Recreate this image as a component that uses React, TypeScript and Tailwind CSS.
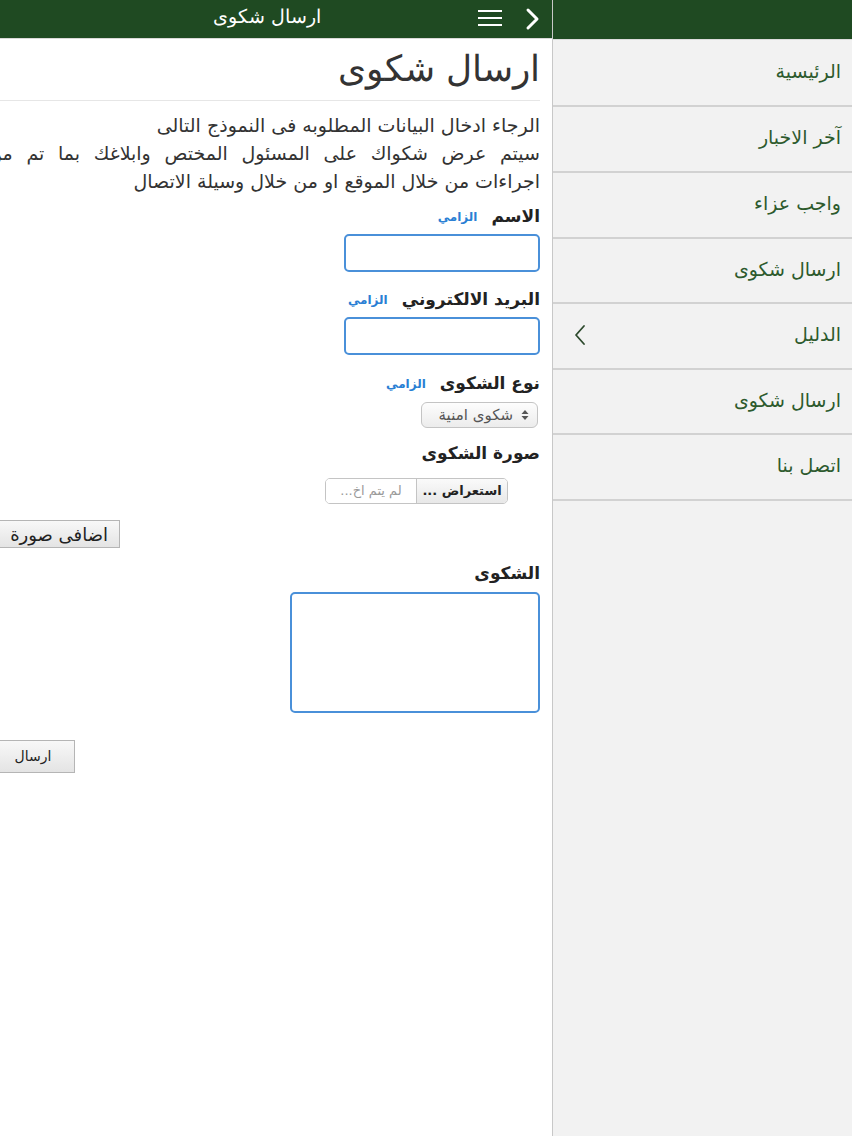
import React from "react";

const font = { fontFamily: '"DejaVu Sans", "Noto Sans", sans-serif' };

function Chevron() {
  return (
    <svg width="16" height="24" viewBox="0 0 16 24" fill="none">
      <path d="M3 3 L12 12 L3 21" stroke="white" strokeWidth="3" strokeLinecap="round" strokeLinejoin="round" />
    </svg>
  );
}

function Burger() {
  return (
    <svg width="26" height="20" viewBox="0 0 26 20" fill="none">
      <path d="M1 3 H25 M1 10 H25 M1 17 H25" stroke="white" strokeWidth="2.2" />
    </svg>
  );
}

function UpDown() {
  return (
    <svg width="8" height="12" viewBox="0 0 8 12">
      <path d="M4 1 L7.5 5 H0.5 Z" fill="#555" />
      <path d="M4 11 L7.5 7 H0.5 Z" fill="#555" />
    </svg>
  );
}

const navItems = [
  { label: "الرئيسية", h: "h-[66px]" },
  { label: "آخر الاخبار", h: "h-[66px]" },
  { label: "واجب عزاء", h: "h-[66px]" },
  { label: "ارسال شكوى", h: "h-[65px]" },
  { label: "الدليل", h: "h-[66px]" },
  { label: "ارسال شكوى", h: "h-[65px]" },
  { label: "اتصل بنا", h: "h-[66px]" },
];

export default function App() {
  return (
    <div className="flex w-[852px] h-[1136px] overflow-hidden bg-white" style={font}>
      {/* main panel */}
      <div className="w-[552px] shrink-0 flex flex-col overflow-hidden bg-white" dir="rtl">
        <div className="h-[39px] shrink-0 bg-[#1f4a22] flex items-center pr-[11px] border-b border-[#d9d9d9]">
          <Chevron />
          <div className="mr-[22px] mt-[-2px]"><Burger /></div>
          <div className="mr-[156px] text-white text-[19px] font-light leading-none mt-[-6px]">ارسال شكوى</div>
        </div>
        <div className="pr-[12px] flex-1">
          <h1 className="text-[36px] leading-[44px] font-light text-[#333] mt-[8px]">ارسال شكوى</h1>
          <div className="h-px bg-[#e6e6e6] mt-[9px] w-[540px]" />
          <div className="mt-[10px] text-[19px] leading-[28px] text-[#333]">
            <div className="whitespace-nowrap">الرجاء ادخال البيانات المطلوبه فى النموذج التالى</div>
            <div className="w-[552px] whitespace-nowrap flex justify-between">
              <span>سيتم</span><span>عرض</span><span>شكواك</span><span>على</span><span>المسئول</span><span>المختص</span><span>وابلاغك</span><span>بما</span><span>تم</span><span>من</span>
            </div>
            <div className="whitespace-nowrap">اجراءات من خلال الموقع او من خلال وسيلة الاتصال</div>
          </div>

          <div className="mt-[10px] flex items-center h-[24px]">
            <span className="text-[17px] font-bold text-[#222]">الاسم</span>
            <span className="mr-[14px] text-[12px] font-bold text-[#2a7fd4]">الزامي</span>
          </div>
          <div className="mt-[5px] w-[196px] h-[38px] rounded-[5px] border-2 border-[#4a90d9] bg-white" />

          <div className="mt-[16px] flex items-center h-[24px]">
            <span className="text-[17px] font-bold text-[#222]">البريد الالكتروني</span>
            <span className="mr-[14px] text-[12px] font-bold text-[#2a7fd4]">الزامي</span>
          </div>
          <div className="mt-[5px] w-[196px] h-[38px] rounded-[5px] border-2 border-[#4a90d9] bg-white" />

          <div className="mt-[17px] flex items-center h-[24px]">
            <span className="text-[17px] font-bold text-[#222]">نوع الشكوى</span>
            <span className="mr-[14px] text-[12px] font-bold text-[#2a7fd4]">الزامي</span>
          </div>
          <div className="mt-[6px] mr-[2px] w-[117px] h-[26px] rounded-[6px] border border-[#c4c4c4] bg-gradient-to-b from-[#fdfdfd] to-[#ececec] flex items-center pr-[8px]">
            <UpDown />
            <span className="mr-[8px] text-[15px] text-[#555]">شكوى امنية</span>
          </div>

          <div className="mt-[14px] flex items-center h-[24px]">
            <span className="text-[17px] font-bold text-[#222]">صورة الشكوى</span>
          </div>
          <div className="mt-[12px] mr-[32px] w-[183px] h-[26px] rounded-[5px] border border-[#c4c4c4] flex overflow-hidden">
            <div className="w-[91px] bg-gradient-to-b from-[#fafafa] to-[#e8e8e8] border-l border-[#c4c4c4] flex items-center justify-center text-[13px] font-bold text-[#222]">استعراض ...</div>
            <div className="flex-1 bg-white flex items-center justify-center text-[13px] text-[#999]">لم يتم اخ...</div>
          </div>

          <div className="mt-[16px] mr-[420px] w-[134px] h-[28px] border border-[#b5b5b5] bg-gradient-to-b from-[#f8f8f8] to-[#e4e4e4] flex items-center pr-[11px] text-[18px] text-[#222] whitespace-nowrap">اضافى صورة</div>

          <div className="mt-[14px] flex items-center h-[24px]">
            <span className="text-[17px] font-bold text-[#222]">الشكوى</span>
          </div>
          <div className="mt-[6px] w-[250px] h-[121px] rounded-[5px] border-2 border-[#4a90d9] bg-white" />

          <div className="mt-[27px] mr-[465px] w-[78px] h-[33px] border border-[#b5b5b5] bg-gradient-to-b from-[#f8f8f8] to-[#e4e4e4] flex items-center justify-center pr-[6px] text-[14px] text-[#222]">ارسال</div>
        </div>
      </div>

      {/* sidebar */}
      <div className="w-[300px] shrink-0 flex flex-col bg-[#f2f2f2] border-l border-[#c8c8c8]" dir="rtl">
        <div className="h-[41px] shrink-0 bg-[#f2f2f2] border-t-[39px] border-[#1f4a22]">
          <div className="h-[1px] bg-[#dcdcdc]" />
        </div>
        {navItems.map((item, i) => (
          <div key={i} className={`${item.h} shrink-0 border-b-2 border-[#d2d2d2] flex items-center justify-between pr-[11px] pl-[20px] pb-[3px]`}>
            <span className="text-[19px] text-[#2d5a2d]">{item.label}</span>
            {item.label === "الدليل" && (
              <svg width="14" height="22" viewBox="0 0 14 22" fill="none">
                <path d="M11 2 L3 11 L11 20" stroke="#2d4a2d" strokeWidth="1.8" strokeLinecap="round" strokeLinejoin="round" />
              </svg>
            )}
          </div>
        ))}
      </div>
    </div>
  );
}
